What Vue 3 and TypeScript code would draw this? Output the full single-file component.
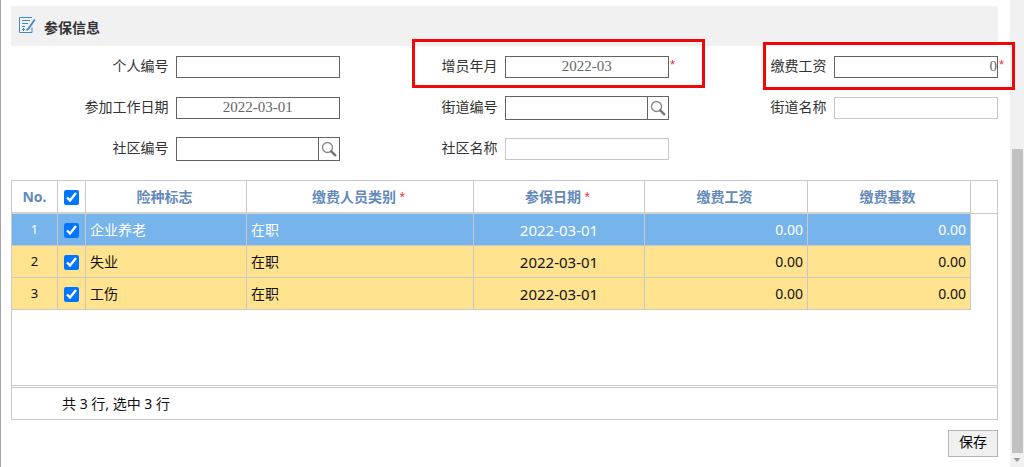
<script setup lang="ts">
import { computed, reactive, ref } from 'vue'

interface Field {
  id: string
  label: string
  value?: string
  align?: 'center' | 'right'
  required?: boolean
  search?: boolean
  disabled?: boolean
  mark?: 'month' | 'wage'
}

interface Row {
  name: string
  category: string
  date: string
  wage: string
  base: string
  checked: boolean
}

const fields = reactive<Field[]>([
  { id: 'personNo', label: '个人编号', value: '' },
  { id: 'addMonth', label: '增员年月', value: '2022-03', align: 'center', required: true, mark: 'month' },
  { id: 'wage', label: '缴费工资', value: '0', align: 'right', required: true, mark: 'wage' },
  { id: 'workDate', label: '参加工作日期', value: '2022-03-01', align: 'center' },
  { id: 'streetNo', label: '街道编号', value: '', search: true },
  { id: 'streetName', label: '街道名称', value: '', disabled: true },
  { id: 'communityNo', label: '社区编号', value: '', search: true },
  { id: 'communityName', label: '社区名称', value: '', disabled: true },
])

const rows = reactive<Row[]>([
  { name: '企业养老', category: '在职', date: '2022-03-01', wage: '0.00', base: '0.00', checked: true },
  { name: '失业', category: '在职', date: '2022-03-01', wage: '0.00', base: '0.00', checked: true },
  { name: '工伤', category: '在职', date: '2022-03-01', wage: '0.00', base: '0.00', checked: true },
])

const active = ref(0)
const selectedCount = computed(() => rows.filter((r) => r.checked).length)
const allChecked = computed({
  get: () => rows.every((r) => r.checked),
  set: (v: boolean) => rows.forEach((r) => (r.checked = v)),
})
</script>

<template>
  <div class="page">
    <main class="content">
      <header class="title-bar">
        <svg class="title-icon" viewBox="0 0 18 18" fill="none" stroke="#4288c8" aria-hidden="true">
          <path d="M14 1.500H1.500v15h12.500v-5" />
          <path d="M4 4.500h8M4 7.500h6M4 10.500h3M4 13.500h3M5.500 12v3" />
          <path d="M16.800 3.500l-6.500 9.500-1.800 1" stroke-width="1.800" />
        </svg>
        <h1>参保信息</h1>
      </header>

      <form class="form" @submit.prevent>
        <div v-for="f in fields" :key="f.id" class="field">
          <label :for="f.id">{{ f.label }}</label>
          <div class="control" :class="{ search: f.search, disabled: f.disabled }">
            <input :id="f.id" v-model="f.value" type="text" :class="f.align" :disabled="f.disabled" />
            <button v-if="f.search" type="button" :aria-label="f.label">
              <svg viewBox="0 0 16 16" fill="none" aria-hidden="true">
                <circle cx="6.500" cy="6.500" r="5" stroke="#888" stroke-width="1.300" />
                <path d="M10.300 10.300l4 4" stroke="#777" stroke-width="2.400" stroke-linecap="round" />
              </svg>
            </button>
            <span v-if="f.required" class="star">*</span>
          </div>
          <span v-if="f.mark" class="mark" :class="f.mark"></span>
        </div>
      </form>

      <section class="grid">
        <div class="grid-body">
          <table>
            <colgroup>
              <col class="c-no" /><col class="c-check" /><col class="c-name" /><col class="c-category" />
              <col class="c-date" /><col class="c-money" /><col class="c-money" /><col class="c-rest" />
            </colgroup>
            <thead>
              <tr>
                <th>No.</th>
                <th class="tick"><input v-model="allChecked" type="checkbox" aria-label="全选" /></th>
                <th>险种标志</th>
                <th>缴费人员类别 <span class="need">*</span></th>
                <th>参保日期 <span class="need">*</span></th>
                <th>缴费工资</th>
                <th>缴费基数</th>
                <th class="rest"></th>
              </tr>
            </thead>
            <tbody>
              <tr v-for="(r, i) in rows" :key="r.name" :class="{ active: i === active }" @click="active = i">
                <td class="no">{{ i + 1 }}</td>
                <td class="tick"><input v-model="r.checked" type="checkbox" :aria-label="r.name" /></td>
                <td>{{ r.name }}</td>
                <td>{{ r.category }}</td>
                <td class="date">{{ r.date }}</td>
                <td class="num">{{ r.wage }}</td>
                <td class="num">{{ r.base }}</td>
                <td class="rest"></td>
              </tr>
            </tbody>
          </table>
        </div>
        <footer class="summary">共 {{ rows.length }} 行, 选中 {{ selectedCount }} 行</footer>
      </section>

      <div class="actions"><button type="button">保存</button></div>
    </main>

    <div class="scrollbar" aria-hidden="true">
      <div class="thumb"></div>
      <svg viewBox="0 0 14 14"><path d="M3.500 5h7L7 9z" fill="#999" /></svg>
    </div>
  </div>
</template>

<style>
body {
  margin: 0;
  background: #fff;
}
</style>

<style scoped>
.page {
  display: flex;
  box-sizing: border-box;
  min-height: 100vh;
  border-left: 1px solid #a5a5a8;
  font-family: "Noto Sans", "Noto Sans CJK SC", sans-serif;
  font-size: 14px;
  color: #111;
}

.content {
  flex: 1;
  min-width: 0;
  padding: 6px 12px 10px 10px;
}

.title-bar {
  display: flex;
  align-items: center;
  gap: 8px;
  height: 40px;
  padding-left: 7px;
  background: #f1f1f1;
}

.title-icon {
  width: 18px;
  height: 18px;
  margin-bottom: 2px;
}

h1 {
  margin: 4px 0 0;
  font-size: 14px;
  line-height: 20px;
  font-weight: bold;
  color: #333;
}

.form {
  display: grid;
  grid-template-columns: repeat(3, minmax(0, 1fr));
  grid-auto-rows: 41px;
}

.field {
  position: relative;
  display: grid;
  grid-template-columns: repeat(2, minmax(0, 1fr));
  align-items: center;
}

label {
  padding: 0 7px 2px 0;
  text-align: right;
  line-height: 20px;
  color: #333;
}

.control {
  position: relative;
  display: flex;
  box-sizing: border-box;
  height: 22px;
  border: 1px solid #636363;
  background: #fff;
}

.control.search {
  height: 24px;
}

.control.disabled {
  border-color: #c8c8c8;
}

.control input {
  flex: 1;
  width: 0;
  min-width: 0;
  padding: 0;
  border: 0;
  outline: 0;
  background: transparent;
  font-family: "Liberation Serif", "Noto Sans CJK SC", serif;
  font-size: 15px;
  color: #666;
}

.control .center {
  text-align: center;
}

.control .right {
  text-align: right;
}

.control button {
  display: flex;
  align-items: center;
  justify-content: center;
  width: 21px;
  padding: 0;
  border: 0;
  border-left: 1px solid #636363;
  background: #fff;
}

.control svg {
  flex: none;
  width: 16px;
  height: 16px;
}

.star {
  position: absolute;
  top: 0;
  left: 100%;
  padding-left: 2px;
  font-family: "Liberation Sans", sans-serif;
  font-size: 13px;
  line-height: 16px;
  color: #f03030;
}

.mark {
  position: absolute;
  box-sizing: border-box;
  border: 3px solid #f00808;
  pointer-events: none;
}

.mark.month {
  inset: -7px -36px -1px 72px;
}

.mark.wage {
  inset: -4px -17px -3px 94px;
}

.grid {
  margin-top: 11px;
  border: 1px solid #c9c9c9;
}

.grid-body {
  min-height: 204px;
}

table {
  width: 100%;
  table-layout: fixed;
  border-collapse: separate;
  border-spacing: 0;
}

.c-no { width: 46px; }
.c-check { width: 28px; }
.c-name { width: 161px; }
.c-category { width: 227px; }
.c-date { width: 171px; }
.c-money { width: 163px; }
.c-rest { width: 26px; }

th,
td {
  box-sizing: border-box;
  height: 32px;
  padding: 0 4px;
  border-right: 1px solid #c9c9c9;
  border-bottom: 1px solid #c9c9c9;
  line-height: 20px;
  text-align: left;
}

th {
  height: 33px;
  padding-right: 7px;
  border-bottom: 2px solid #d3d3d3;
  text-align: center;
  color: #6389bb;
}

th:first-child {
  padding: 0;
}

td {
  background: #ffe38f;
}

.active td {
  background: #77b4ec;
  color: #fff;
}

th.rest {
  border-right: 0;
  border-bottom: 1px solid #c9c9c9;
}

td.rest {
  border: 0;
  background: transparent;
}

.no {
  padding-bottom: 1px;
  text-align: center;
  font-size: 13px;
}

.date {
  text-align: center;
  font-size: 15px;
}

.num {
  text-align: right;
}

.need {
  font-family: "Liberation Sans", sans-serif;
  font-weight: normal;
  color: #f03030;
}

th.tick,
td.tick {
  padding: 0;
}

.tick input {
  display: block;
  width: 15px;
  height: 15px;
  margin: 2px auto 0;
  accent-color: #0075ff;
}

.summary {
  padding: 6px 50px 5px;
  border-top: 3px double #c9c9c9;
  line-height: 20px;
}

.actions {
  display: flex;
  justify-content: flex-end;
  padding-top: 10px;
}

.actions button {
  width: 50px;
  height: 27px;
  padding: 0 0 4px;
  border: 1px solid #b5b5b5;
  background: #f0f0f0;
  font-family: inherit;
  font-size: 14px;
  line-height: 20px;
  color: #000;
}

.scrollbar {
  display: flex;
  flex-direction: column;
  justify-content: flex-end;
  width: 14px;
  background: #f1f1f1;
}

.thumb {
  flex: 0 1 304px;
  margin: 0 1px 0 2px;
  background: #c1c1c1;
}

.scrollbar svg {
  width: 14px;
  height: 14px;
}
</style>
